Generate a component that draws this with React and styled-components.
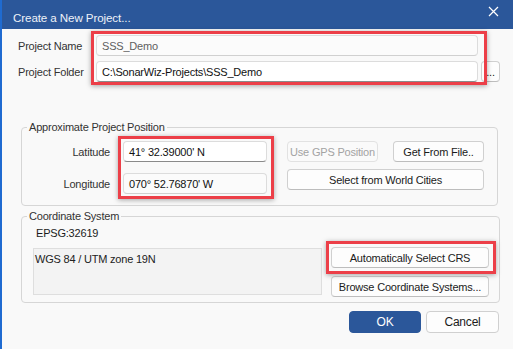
import React from 'react';
import styled, { createGlobalStyle } from 'styled-components';

const GlobalStyle = createGlobalStyle`
    html, body {
        margin: 0;
        padding: 0;
        background: #f9f9f9;
    }
    * {
        box-sizing: border-box;
    }
`;

const Window = styled.div`
    width: 513px;
    height: 349px;
    display: flex;
    flex-direction: column;
    background: #f9f9f9;
    border-left: 2px solid #1f6bd1;
    font-family: 'Liberation Sans', Arial, sans-serif;
    font-size: 11px;
    letter-spacing: -0.2px;
    color: #1b1b1b;
    overflow: hidden;
`;

const TitleBar = styled.div`
    height: 29px;
    flex-shrink: 0;
    background: #2b579a;
    color: #eef2f8;
    display: flex;
    align-items: center;
    justify-content: space-between;
    padding: 5px 0 0 11px;
    font-size: 11.6px;
    letter-spacing: -0.1px;
`;

const CloseButton = styled.svg`
    align-self: flex-start;
    margin: 1px 14px 0 0;
`;

const Body = styled.div`
    flex: 1;
    display: flex;
    flex-direction: column;
    padding: 6px 14px 0 16px;
`;

const ProjectGrid = styled.div`
    position: relative;
    display: grid;
    grid-template-columns: 75px 382px 19px;
    column-gap: 3px;
    row-gap: 5px;
    align-items: center;
`;

const Label = styled.span`
    color: #333;
    text-align: ${(p) => (p.$right ? 'right' : 'left')};
`;

const Field = styled.div`
    height: 21px;
    display: flex;
    align-items: center;
    padding: 0 5px;
    border: 1px solid #dcdcdc;
    border-bottom-color: ${(p) => (p.$focused ? '#8a8a8a' : '#d0d0d0')};
    border-radius: 4px;
    background: ${(p) => (p.$focused ? '#ffffff' : '#fbfbfb')};
    color: ${(p) => (p.$muted ? '#5f5f5f' : '#111')};
    white-space: nowrap;
`;

const Button = styled.div`
    height: 21px;
    display: flex;
    align-items: center;
    justify-content: center;
    border: 1px solid ${(p) => (p.$disabled ? '#e2e2e2' : '#d0d0d0')};
    border-bottom-color: ${(p) => (p.$disabled ? '#e2e2e2' : '#bdbdbd')};
    border-radius: 4px;
    background: ${(p) => (p.$disabled ? '#fafafa' : '#fdfdfd')};
    color: ${(p) => (p.$disabled ? '#a3a3a3' : '#1b1b1b')};
    white-space: nowrap;
`;

const Highlight = styled.div`
    position: absolute;
    border: 3px solid #ec3f48;
    box-shadow: 0 1px 5px rgba(0, 0, 0, 0.35);
    pointer-events: none;
`;

const Group = styled.fieldset`
    position: relative;
    margin: 0;
    padding: 0;
    border: 1px solid #d6d6d6;
    border-radius: 4px;
    min-width: 0;
`;

const Legend = styled.legend`
    margin-left: 5px;
    padding: 0 2px;
    color: #333;
    line-height: 14px;
`;

const PositionInner = styled.div`
    display: flex;
    padding: 7px 0 11px 0;
`;

const CoordGrid = styled.div`
    position: relative;
    display: grid;
    grid-template-columns: 88px 144px;
    column-gap: 13px;
    row-gap: 11px;
    align-items: center;
`;

const ButtonGrid = styled.div`
    display: grid;
    grid-template-columns: 91px 91px;
    column-gap: 15px;
    row-gap: 7px;
    margin: 0 0 0 20px;
    align-self: flex-start;
`;

const WideCell = styled.div`
    grid-column: 1 / 3;
`;

const CrsInner = styled.div`
    display: flex;
    flex-direction: column;
    padding: 1px 10px 5px 11px;
`;

const Epsg = styled.div`
    padding-left: 3px;
    height: 18px;
    display: flex;
    align-items: center;
`;

const CrsRow = styled.div`
    display: flex;
    justify-content: space-between;
    align-items: flex-start;
    margin-top: 6px;
`;

const CrsBox = styled.div`
    width: 289px;
    height: 47px;
    border: 1px solid #dedede;
    background: #f3f3f3;
    padding: 4px 1px;
    color: #222;
`;

const CrsButtons = styled.div`
    position: relative;
    width: 158px;
    display: flex;
    flex-direction: column;
    gap: 8px;
    margin-top: -1px;
`;

const Footer = styled.div`
    display: flex;
    justify-content: flex-end;
    gap: 5px;
    margin-top: 8px;
`;

const DialogButton = styled.div`
    width: ${(p) => p.$w}px;
    height: 22px;
    display: flex;
    align-items: center;
    justify-content: center;
    border-radius: 4px;
    border: 1px solid ${(p) => (p.$primary ? '#2b579a' : '#d0d0d0')};
    background: ${(p) => (p.$primary ? '#2b579a' : '#fdfdfd')};
    color: ${(p) => (p.$primary ? '#ffffff' : '#1b1b1b')};
    font-size: 12px;
`;

export default function App() {
    return (
        <>
            <GlobalStyle />
            <Window>
                <TitleBar>
                    <span>Create a New Project...</span>
                    <CloseButton width="11" height="11" viewBox="0 0 11 11">
                        <path d="M1 1 L10 10 M10 1 L1 10" stroke="#ffffff" strokeWidth="1.2" fill="none" />
                    </CloseButton>
                </TitleBar>
                <Body>
                    <ProjectGrid>
                        <Label>Project Name</Label>
                        <Field $muted>SSS_Demo</Field>
                        <span />
                        <Label>Project Folder</Label>
                        <Field $focused>C:\SonarWiz-Projects\SSS_Demo</Field>
                        <Button>...</Button>
                        <Highlight style={{ left: 73, top: -4, width: 396, height: 54 }} />
                    </ProjectGrid>

                    <Group style={{ marginTop: 38, marginLeft: 3, marginRight: 1 }}>
                        <Legend>Approximate Project Position</Legend>
                        <PositionInner>
                            <CoordGrid>
                                <Label $right>Latitude</Label>
                                <Field $focused>41° 32.39000' N</Field>
                                <Label $right>Longitude</Label>
                                <Field>070° 52.76870' W</Field>
                                <Highlight style={{ left: 96, top: -5, width: 156, height: 63 }} />
                            </CoordGrid>
                            <ButtonGrid>
                                <Button $disabled>Use GPS Position</Button>
                                <Button>Get From File..</Button>
                                <WideCell>
                                    <Button>Select from World Cities</Button>
                                </WideCell>
                            </ButtonGrid>
                        </PositionInner>
                    </Group>

                    <Group style={{ marginTop: 3, marginLeft: 3, marginRight: -1 }}>
                        <Legend>Coordinate System</Legend>
                        <CrsInner>
                            <Epsg>EPSG:32619</Epsg>
                            <CrsRow>
                                <CrsBox>WGS 84 / UTM zone 19N</CrsBox>
                                <CrsButtons>
                                    <Button>Automatically Select CRS</Button>
                                    <Button>Browse Coordinate Systems...</Button>
                                    <Highlight style={{ left: -5, top: -6, width: 170, height: 33 }} />
                                </CrsButtons>
                            </CrsRow>
                        </CrsInner>
                    </Group>

                    <Footer>
                        <DialogButton $primary $w={72}>OK</DialogButton>
                        <DialogButton $w={73}>Cancel</DialogButton>
                    </Footer>
                </Body>
            </Window>
        </>
    );
}
